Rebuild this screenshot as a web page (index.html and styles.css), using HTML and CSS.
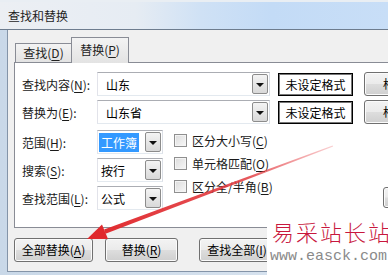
FILE: index.html
```html
<!DOCTYPE html>
<html lang="zh-CN">
<head>
    <meta charset="UTF-8">
    <title>查找和替换</title>
    <link rel="stylesheet" href="styles.css">
</head>
<body>
    <div class="window">
        <div class="titlebar">查找和替换</div>
        <div class="frame">
            <div class="client">
                <div class="tabs">
                    <div class="tab">查找(<u>D</u>)</div>
                    <div class="tab active">替换(<u>P</u>)</div>
                </div>

                <div class="panel">
                    <div class="row">
                        <span class="label">查找内容(<u>N</u>):</span>
                        <div class="combo wide"><span class="value">山东</span><span class="drop"></span></div>
                        <div class="fmt">未设定格式</div>
                        <div class="btn fmt-btn">格式(<u>M</u>)...</div>
                    </div>
                    <div class="row">
                        <span class="label">替换为(<u>E</u>):</span>
                        <div class="combo wide"><span class="value">山东省</span><span class="drop"></span></div>
                        <div class="fmt">未设定格式</div>
                        <div class="btn fmt-btn">格式(<u>M</u>)...</div>
                    </div>

                    <div class="options">
                        <div class="selects">
                            <div class="row">
                                <span class="label">范围(<u>H</u>):</span>
                                <div class="combo small"><span class="value picked">工作簿</span><span class="drop"></span></div>
                            </div>
                            <div class="row">
                                <span class="label">搜索(<u>S</u>):</span>
                                <div class="combo small"><span class="value">按行</span><span class="drop"></span></div>
                            </div>
                            <div class="row">
                                <span class="label">查找范围(<u>L</u>):</span>
                                <div class="combo small"><span class="value">公式</span><span class="drop"></span></div>
                            </div>
                        </div>
                        <div class="checks">
                            <label class="check"><span class="box"></span><span>区分大小写(<u>C</u>)</span></label>
                            <label class="check"><span class="box"></span><span>单元格匹配(<u>O</u>)</span></label>
                            <label class="check"><span class="box"></span><span>区分全/半角(<u>B</u>)</span></label>
                        </div>
                        <div class="more">
                            <div class="btn">选项(<u>T</u>) &lt;&lt;</div>
                        </div>
                    </div>
                </div>

                <div class="actions">
                    <div class="btn all">全部替换(<u>A</u>)</div>
                    <div class="btn one">替换(<u>R</u>)</div>
                    <div class="btn find">查找全部(<u>I</u>)</div>
                </div>
            </div>
        </div>
    </div>

    <!-- red arrow drawn over the dialog -->
    <svg class="arrow" width="388" height="275" viewBox="0 0 388 275">
        <defs>
            <linearGradient id="fade" x1="333" y1="146" x2="88" y2="238" gradientUnits="userSpaceOnUse">
                <stop offset="0" stop-color="#e8454a" stop-opacity="0.25"/>
                <stop offset="0.35" stop-color="#e23a3f" stop-opacity="0.85"/>
                <stop offset="1" stop-color="#e0282c"/>
            </linearGradient>
        </defs>
        <polygon points="333.2,146.6 332.6,145.4 104.1,229.6 105.5,233.8" fill="url(#fade)"/>
        <polygon points="87,239 102,224.5 108,239" fill="#e0282c"/>
    </svg>

    <div class="watermark">
        <div class="wm-title">易采站长站</div>
        <div class="wm-url">www.easck.com</div>
    </div>
</body>
</html>
```

FILE: styles.css
```css
body {
    margin: 0;
    width: 388px;
    height: 275px;
    overflow: hidden;
    position: relative;
    background-color: #d7e2ee;
    font-family: "Noto Sans CJK SC", "Liberation Sans", sans-serif;
    font-size: 12px;
    color: #000;
}

u {
    text-decoration-thickness: 1px;
    text-underline-offset: 2px;
}

/*janela*/
.window {
    height: 275px;
    display: flex;
    flex-direction: column;
}

.titlebar {
    height: 27px;
    line-height: 27px;
    padding-left: 8px;
    border-top: 2px solid #e9eef3;
    border-bottom: 1px solid #6d7c8e;
    background: linear-gradient(to right, #eceff3 0%, #e6ecf3 35%, #cfe1f5 52%, #c3dbf6 70%, #c8def7 100%);
    color: #1e1e1e;
}

.frame {
    flex: 1;
    display: flex;
    padding-left: 7px;
    padding-bottom: 3px;
    background: linear-gradient(to right, #c9d8e8, #dce6f1);
}

.client {
    flex: 1;
    background-color: #f0f0f0;
    border-left: 1px solid #8494a8;
    border-bottom: 1px solid #8494a8;
    padding: 7px 0 0 6px;
    overflow: hidden;
}

/*abas*/
.tabs {
    display: flex;
    align-items: flex-end;
    height: 25px;
    padding-left: 1px;
}

.tab {
    width: 55px;
    height: 18px;
    line-height: 18px;
    text-align: center;
    border: 1px solid #898c95;
    border-bottom: none;
    background: linear-gradient(#f3f3f3, #e3e3e3);
    color: #222;
}

.tab.active {
    width: 56px;
    height: 25px;
    line-height: 23px;
    margin-left: -1px;
    margin-bottom: -1px;
    background-color: #fff;
    position: relative;
    z-index: 1;
}

.panel {
    width: 400px;
    height: 155px;
    background-color: #fff;
    border: 1px solid #898c95;
    padding: 9px 0 0 7px;
}

.row {
    display: flex;
    align-items: center;
    height: 24px;
    margin-bottom: 4px;
}

.label {
    width: 75px;
    flex-shrink: 0;
    color: #1a1a1a;
}

/*combos*/
.combo {
    height: 22px;
    border: 1px solid #abadb3;
    border-left-color: #e2e3ea;
    border-right-color: #dbdfe6;
    border-bottom-color: #e3e9ef;
    display: flex;
    align-items: center;
    position: relative;
    flex-shrink: 0;
}

.combo.wide {
    width: 171px;
}

.combo.wide .value {
    padding-left: 8px;
}

.combo.small {
    width: 64px;
}

.combo.small .value {
    padding-left: 3px;
}

.value.picked {
    margin-left: 1px;
    padding: 1px 2px 1px 2px !important;
    background-color: #3399ff;
    color: #fff;
}

.drop {
    position: absolute;
    top: 1px;
    right: 1px;
    bottom: 1px;
    width: 14px;
    border: 1px solid #8c8c8c;
    border-radius: 2px;
    background: linear-gradient(#f4f4f4, #d9d9d9);
}

.drop::after {
    content: "";
    position: absolute;
    left: 3px;
    top: 8px;
    border-left: 4px solid transparent;
    border-right: 4px solid transparent;
    border-top: 4px solid #111;
}

.fmt {
    width: 73px;
    height: 21px;
    line-height: 21px;
    margin-left: 8px;
    text-align: center;
    border: 1px solid #000;
    box-shadow: inset 0 0 0 1px #777;
    flex-shrink: 0;
}

/*botoes*/
.btn {
    height: 22px;
    line-height: 22px;
    text-align: center;
    border: 1px solid #707070;
    border-radius: 3px;
    background: linear-gradient(#f3f3f3 0%, #ebebeb 48%, #dddddd 52%, #cfcfcf 100%);
    box-shadow: inset 0 0 0 1px #fbfbfb;
    flex-shrink: 0;
}

.fmt-btn {
    width: 78px;
    margin-left: 11px;
    text-indent: 18px;
    text-align: left;
}

/*opcoes*/
.options {
    display: flex;
    margin-top: 6px;
}

.selects .row {
    margin-bottom: 4px;
}

.checks {
    width: 209px;
    margin-left: 11px;
    margin-top: -1px;
    flex-shrink: 0;
}

.check {
    display: flex;
    align-items: center;
    height: 23px;
    gap: 5px;
    color: #1a1a1a;
}

.box {
    width: 11px;
    height: 11px;
    border: 1px solid #8f8f8f;
    background: linear-gradient(135deg, #dcdcdc, #f7f7f7);
    box-shadow: inset 0 0 0 1px #f4f4f4;
}

.more {
    padding-top: 57px;
}

.more .btn {
    width: 78px;
    height: 19px;
    line-height: 19px;
}

.actions {
    display: flex;
    margin-top: 10px;
}

.all {
    width: 77px;
}

.one {
    width: 71px;
    margin-left: 12px;
}

.find {
    width: 80px;
    margin-left: 21px;
    text-indent: -6px;
}

/*seta e marca d'agua*/
.arrow {
    position: absolute;
    left: 0;
    top: 0;
}

.watermark {
    position: absolute;
    left: 267px;
    top: 213px;
    width: 121px;
    height: 62px;
    background-color: #fff;
}

.wm-title {
    margin: 5px 0 0 5px;
    font-size: 22px;
    font-weight: 300;
    line-height: 26px;
    letter-spacing: 2px;
    white-space: nowrap;
    color: #c8173d;
}

.wm-url {
    margin: 5px 0 0 3px;
    font-family: "Liberation Mono", monospace;
    font-size: 15px;
    line-height: 16px;
    white-space: nowrap;
    color: #8a8a8a;
}
```
